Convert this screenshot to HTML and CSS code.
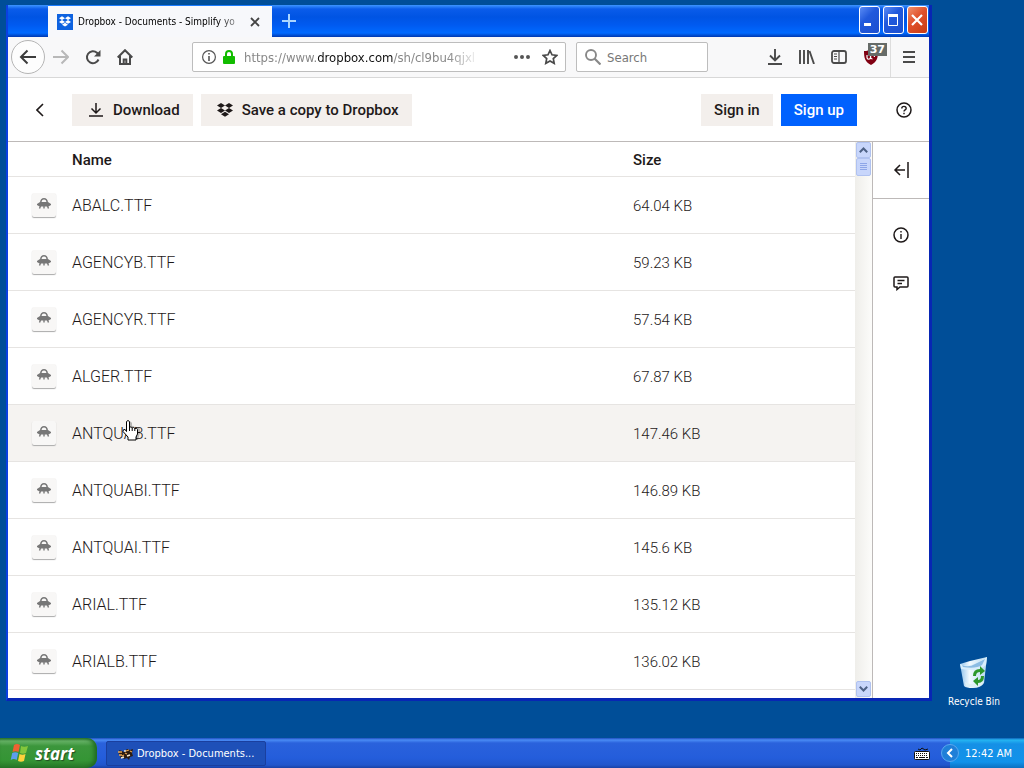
FILE: index.html
```html
<!DOCTYPE html>
<html lang="en">
<head>
  <meta charset="UTF-8">
  <title>Dropbox - Documents - Simplify your life</title>
  <link rel="stylesheet" href="styles.css">
</head>
<body>

  <!-- Shared icons -->
  <svg class="sprite" aria-hidden="true">
    <symbol id="dropbox" viewBox="0 0 16 14">
      <path d="M4 0l4 2.500L4 5 0 2.500zM12 0l4 2.500L12 5 8 2.500zM4 5l4 2.500L4 10 0 7.500zM12 5l4 2.500L12 10 8 7.500zM8 8.700l4 2.500L8 13.800l-4-2.600z" fill="currentColor"/>
    </symbol>
    <symbol id="ufo" viewBox="0 0 14 11">
      <path d="M3.800 4.500a3.200 3.700 0 0 1 6.400 0" fill="none" stroke="#777" stroke-width="1.600"/>
      <path d="M3 4h8l3 2v1l-2.500 1.500h-9L0 7V6z" fill="#777"/>
      <path d="M3.500 8L2.500 10.500M7 8v2.500M10.500 8l1 2.500" stroke="#777" stroke-width="1.400"/>
    </symbol>
  </svg>

  <div class="desktop">
    <!-- Browser window -->
    <div class="window">
      <div class="titlebar">
        <div class="tab">
          <span class="favicon"><svg width="12" height="11"><use href="#dropbox"/></svg></span>
          <span class="tab-title">Dropbox - Documents - Simplify yo</span>
          <button class="plain tab-close" aria-label="Close tab"><svg width="10" height="10" viewBox="0 0 10 10"><path d="M1 1l8 8M9 1L1 9" stroke="#444" stroke-width="1.800"/></svg></button>
        </div>
        <button class="plain new-tab" aria-label="New tab"><svg width="14" height="14" viewBox="0 0 14 14"><path d="M7 0v14M0 7h14" stroke="#a9d5ff" stroke-width="2"/></svg></button>
        <div class="window-buttons">
          <button class="xp-button" aria-label="Minimize"><svg width="18" height="24" viewBox="0 0 18 24"><path d="M4 16.500h7" stroke="#fff" stroke-width="3"/></svg></button>
          <button class="xp-button" aria-label="Maximize"><svg width="18" height="24" viewBox="0 0 18 24"><path d="M4.500 7v10.500h9V7z" fill="none" stroke="#fff"/><path d="M4 7.500h10" stroke="#fff" stroke-width="3"/></svg></button>
          <button class="xp-button xp-close" aria-label="Close"><svg width="18" height="24" viewBox="0 0 18 24"><path d="M4 7l10 10M14 7L4 17" stroke="#fff" stroke-width="2.200"/></svg></button>
        </div>
      </div>

      <div class="toolbar">
        <button class="plain back" aria-label="Back"><svg width="18" height="16" viewBox="0 0 18 16"><path d="M17 8H2M8.500 1.500L2 8l6.500 6.500" fill="none" stroke="#3c3c3c" stroke-width="2"/></svg></button>
        <button class="plain tool" aria-label="Forward"><svg width="16" height="16" viewBox="0 0 16 16"><path d="M0 8h14.500M8.500 1.500L15 8l-6.500 6.500" fill="none" stroke="#b8b8b8" stroke-width="2"/></svg></button>
        <button class="plain tool" aria-label="Reload"><svg width="16" height="16" viewBox="0 0 16 16"><path d="M13.500 10.500A6 6 0 1 1 12 3.800L13.500 5.500" fill="none" stroke="#4a4a4a" stroke-width="2"/><path d="M15.500 1v6.500H9z" fill="#4a4a4a"/></svg></button>
        <button class="plain tool" aria-label="Home"><svg width="16" height="16" viewBox="0 0 16 16"><path d="M.7 8.500L8 1.200l7.300 7.300M3 7v8h10V7M6.700 15v-4.500h2.600V15" fill="none" stroke="#4a4a4a" stroke-width="2"/></svg></button>
        <span class="spacer"></span>
        <div class="address">
          <svg width="14" height="14" viewBox="0 0 14 14"><circle cx="7" cy="7" r="6.400" fill="none" stroke="#555" stroke-width="1.200"/><path d="M7 3v1.600M7 6v5" stroke="#555" stroke-width="1.600"/></svg>
          <svg class="lock" width="12" height="14" viewBox="0 0 12 14"><path d="M3 7V4a3 3 0 0 1 6 0v3" fill="none" stroke="#12bc00" stroke-width="2"/><rect y="6" width="12" height="8" rx="1" fill="#12bc00"/></svg>
          <a class="url" href="#">https://www.<b>dropbox.com</b>/sh/cl9bu4qjxl</a>
          <button class="plain dots" aria-label="Page actions"><svg width="16" height="4" viewBox="0 0 16 4"><path d="M0 2a2 2 0 1 1 4 0 2 2 0 0 1-4 0M6 2a2 2 0 1 1 4 0 2 2 0 0 1-4 0M12 2a2 2 0 1 1 4 0 2 2 0 0 1-4 0" fill="#555"/></svg></button>
          <button class="plain" aria-label="Bookmark"><svg width="16" height="16" viewBox="0 0 16 16"><path d="M8 1.500l2 4.300 4.800.6-3.500 3.200.9 4.700L8 12l-4.200 2.300.9-4.700L1.200 6.400 6 5.800z" fill="none" stroke="#4a4a4a" stroke-width="1.700"/></svg></button>
        </div>
        <div class="search">
          <svg width="16" height="16" viewBox="0 0 16 16"><circle cx="6" cy="6" r="5" fill="none" stroke="#888" stroke-width="1.900"/><path d="M9.500 9.500l6 6" stroke="#888" stroke-width="2.200"/></svg>
          <input type="text" placeholder="Search" aria-label="Search">
        </div>
        <span class="spacer"></span>
        <button class="plain tool" aria-label="Downloads"><svg width="14" height="16" viewBox="0 0 14 16"><path d="M7 0v11M2 6.500l5 5 5-5M0 15h14" fill="none" stroke="#4a4a4a" stroke-width="1.900"/></svg></button>
        <button class="plain tool" aria-label="Library"><svg width="16" height="14" viewBox="0 0 16 14"><path d="M1 0v14M5 0v14M9 0v14M10.500 1l4.500 13" fill="none" stroke="#4a4a4a" stroke-width="1.900"/></svg></button>
        <button class="plain tool" aria-label="Sidebars"><svg width="16" height="14" viewBox="0 0 16 14"><rect x="1" y="1" width="14" height="12" rx="2" fill="none" stroke="#4a4a4a" stroke-width="1.800"/><path d="M8 1v12M3 4h3M3 6.500h3M3 9h3" stroke="#4a4a4a" stroke-width="1.200"/></svg></button>
        <button class="plain tool shield" aria-label="Blocked requests">
          <svg width="14" height="16" viewBox="0 0 14 16"><path d="M7 0c2 1.500 4 2 7 2 0 7-1 11-7 14C1 13 0 9 0 2c3 0 5-.5 7-2z" fill="#800012"/><path d="M3 6v2.500a1.500 1.500 0 0 0 3.500 0V6M8.500 10a2 2 0 1 1 2-2" fill="none" stroke="#fff" stroke-width="1.200"/></svg>
          <span class="badge">37</span>
        </button>
        <button class="plain menu" aria-label="Menu"><svg width="12" height="12" viewBox="0 0 12 12"><path d="M0 1h12M0 6h12M0 11h12" stroke="#4a4a4a" stroke-width="1.800"/></svg></button>
      </div>

      <!-- Page header -->
      <div class="page-header">
        <button class="plain page-back" aria-label="Go back"><svg width="8" height="14" viewBox="0 0 8 14"><path d="M7 1L1 7l6 6" fill="none" stroke="#1e1919" stroke-width="1.600"/></svg></button>
        <button class="btn"><svg width="16" height="14" viewBox="0 0 16 14"><path d="M8 0v10M3.500 5.500L8 10l4.500-4.500M1 13h14" fill="none" stroke="#1e1919" stroke-width="1.500"/></svg>Download</button>
        <button class="btn"><svg width="16" height="14"><use href="#dropbox"/></svg>Save a copy to Dropbox</button>
        <span class="spacer"></span>
        <button class="btn sign-in">Sign in</button>
        <button class="btn primary">Sign up</button>
        <button class="plain help" aria-label="Help"><svg width="16" height="16" viewBox="0 0 16 16"><circle cx="8" cy="8" r="7" fill="none" stroke="#1e1919" stroke-width="1.500"/><path d="M5.800 6.500C5.800 3.700 10.200 3.700 10.200 6.300 10.200 8 8 7.700 8 9.600M8 10.800v1.500" fill="none" stroke="#1e1919" stroke-width="1.400"/></svg></button>
      </div>

      <div class="content">
        <div class="files">
          <table>
            <thead>
              <tr><th class="name">Name</th><th>Size</th></tr>
            </thead>
            <tbody>
              <tr><td><a class="file" href="#"><span class="thumb"><svg width="14" height="11"><use href="#ufo"/></svg></span>ABALC.TTF</a></td><td>64.04 KB</td></tr>
              <tr><td><a class="file" href="#"><span class="thumb"><svg width="14" height="11"><use href="#ufo"/></svg></span>AGENCYB.TTF</a></td><td>59.23 KB</td></tr>
              <tr><td><a class="file" href="#"><span class="thumb"><svg width="14" height="11"><use href="#ufo"/></svg></span>AGENCYR.TTF</a></td><td>57.54 KB</td></tr>
              <tr><td><a class="file" href="#"><span class="thumb"><svg width="14" height="11"><use href="#ufo"/></svg></span>ALGER.TTF</a></td><td>67.87 KB</td></tr>
              <tr class="hovered"><td><a class="file" href="#"><span class="thumb"><svg width="14" height="11"><use href="#ufo"/></svg></span>ANTQUAB.TTF</a></td><td>147.46 KB</td></tr>
              <tr><td><a class="file" href="#"><span class="thumb"><svg width="14" height="11"><use href="#ufo"/></svg></span>ANTQUABI.TTF</a></td><td>146.89 KB</td></tr>
              <tr><td><a class="file" href="#"><span class="thumb"><svg width="14" height="11"><use href="#ufo"/></svg></span>ANTQUAI.TTF</a></td><td>145.6 KB</td></tr>
              <tr><td><a class="file" href="#"><span class="thumb"><svg width="14" height="11"><use href="#ufo"/></svg></span>ARIAL.TTF</a></td><td>135.12 KB</td></tr>
              <tr><td><a class="file" href="#"><span class="thumb"><svg width="14" height="11"><use href="#ufo"/></svg></span>ARIALB.TTF</a></td><td>136.02 KB</td></tr>
            </tbody>
          </table>
        </div>
        <div class="scrollbar">
          <button class="scroll-button" aria-label="Scroll up"><svg width="9" height="6" viewBox="0 0 9 6"><path d="M.8 5.200l3.700-3.700 3.700 3.700" fill="none" stroke="#4d6185" stroke-width="2"/></svg></button>
          <div class="scroll-thumb"><svg width="7" height="8" viewBox="0 0 7 8"><path d="M0 .5h7M0 2.500h7M0 4.500h7M0 6.500h7" stroke="#8ea6e8"/></svg></div>
          <span class="spacer"></span>
          <button class="scroll-button" aria-label="Scroll down"><svg width="9" height="6" viewBox="0 0 9 6"><path d="M.8.8l3.700 3.700L8.200.8" fill="none" stroke="#4d6185" stroke-width="2"/></svg></button>
        </div>
        <div class="side">
          <button class="plain collapse" aria-label="Open sidebar"><svg width="16" height="16" viewBox="0 0 16 16"><path d="M12 8H2M7 3L2 8l5 5M15 0v16" fill="none" stroke="#1e1919" stroke-width="1.500"/></svg></button>
          <button class="plain side-button" aria-label="File info"><svg width="16" height="16" viewBox="0 0 16 16"><circle cx="8" cy="8" r="7" fill="none" stroke="#1e1919" stroke-width="1.500"/><path d="M8 4v1.600M8 7v5" stroke="#1e1919" stroke-width="1.400"/></svg></button>
          <button class="plain side-button" aria-label="Comments"><svg width="16" height="16" viewBox="0 0 16 16"><path d="M2 2h12q1 0 1 1v8q0 1-1 1H7l-3 2.500V12H2q-1 0-1-1V3q0-1 1-1z" fill="none" stroke="#1e1919" stroke-width="1.500"/><path d="M4.500 5.500h7M4.500 8.500h4.500" stroke="#1e1919" stroke-width="1.400"/></svg></button>
        </div>
      </div>
    </div>

    <!-- Desktop icon -->
    <a class="recycle" href="#">
      <svg width="30" height="32" viewBox="0 0 30 32">
        <defs><linearGradient id="bin"><stop offset="0" stop-color="#8fc2ec"/><stop offset=".35" stop-color="#f2faff"/><stop offset="1" stop-color="#b5d8ee"/></linearGradient></defs>
        <path d="M1 7l10-3 17-4-3 26q-3 5-11 5-7 0-9-2z" fill="url(#bin)"/>
        <path d="M1 7q8 3 14 0t13-7l-1 8q-6 5-12 5T2 12z" fill="#d9eefb"/>
        <path d="M3 8q7 3 13-1l10-5-3 6q-6 4-19 2z" fill="#8bbce3"/>
        <path d="M6 25q9 5 19-1l-2 4q-8 4-16 1z" fill="#dff0f5"/>
        <path d="M14 19q0-7 7-7V9l5 5-5 4v-3q-4 0-4 4zM25 19q0 7-6 7v3l-5-5 5-4v3q3 0 3-4z" fill="#2d982a"/>
      </svg>
      <span>Recycle Bin</span>
    </a>

    <!-- Hand pointer -->
    <svg class="cursor" width="19" height="24" viewBox="0 0 19 24">
      <path d="M7 4V14L5 11q-2-2-3 0l5 10h9l2-7v-4q-1-2-3-1-1-2-3-1-1-2-2-1V4q-2-3-3 0z" fill="#000" opacity=".25"/>
      <path d="M4.500 2.500q1.500-2 3 0v6q1.500-1.500 2.700.3 1.500-1 2.600.7 2-.8 2.700 1V15l-1.500 3v3h-8v-3L1 12.500Q.8 10 3 10.500l1.500 2z" fill="#fff" stroke="#000"/>
      <path d="M7.500 8v4M10.200 9v3M12.800 9.500V12" stroke="#000"/>
    </svg>
  </div>

  <div class="taskbar">
    <button class="start">
      <svg width="20" height="20" viewBox="0 0 20 20">
        <path d="M4 2q3-2 6 0L8.500 9q-3-1.500-6 0z" fill="#ee6132"/>
        <path d="M11 3q3 1.500 7 0l-2 7q-3 1.500-6 0z" fill="#83c63c"/>
        <path d="M2.200 10q3-1.500 6 0l-1.500 7q-3-2-6 0z" fill="#5d9eee"/>
        <path d="M9.500 11q3 1.500 6 0L14 18q-3 1.500-6 0z" fill="#ffd23c"/>
      </svg>
      start
    </button>
    <button class="task">
      <svg width="16" height="14" viewBox="0 0 16 14">
        <path d="M1 3l3 1 2 1 3-3 3 1 3-1-1 4 1 3-3 1-1 3-2-2-3 1-1-2-3 1 1-3-3-1 2-1z" fill="#2b1c12"/>
        <path d="M0 5h4M1 8h3M8 4l3-1M7 6l2 1M12 4l2 1M4 9l2-1" stroke="#e9a44c" stroke-width="1.300"/>
        <path d="M9 9l3-1M6 4h2M3 11l3-1" stroke="#f7ead0" stroke-width="1.400"/>
      </svg>
      Dropbox - Documents...
    </button>
    <span class="spacer"></span>
    <svg class="keyboard" width="16" height="14" viewBox="0 0 16 14">
      <path d="M4 2l2 1 2-2 3 2 3-1" fill="none" stroke="#111"/>
      <rect x=".5" y="4.500" width="15" height="8" rx="1" fill="#fff" stroke="#111"/>
      <path d="M2 6.500h12M2 8.500h12" stroke="#111" stroke-dasharray="1 1"/><path d="M2 10.500h2M5 10.500h6M12 10.500h2" stroke="#111"/>
    </svg>
    <div class="tray">
      <button class="tray-toggle" aria-label="Show hidden icons"><svg width="8" height="10" viewBox="0 0 8 10"><path d="M6 1L2 5l4 4" fill="none" stroke="#fff" stroke-width="2"/></svg></button>
      <span>12:42 AM</span>
    </div>
  </div>

</body>
</html>
```

FILE: styles.css
```css
* { box-sizing: border-box; }
body {
  margin: 0;
  height: 100vh;
  display: flex;
  flex-direction: column;
  overflow: hidden;
  background: #004e98;
  font-family: "DejaVu Sans Condensed", "DejaVu Sans", sans-serif;
  font-size: 10px;
}
button {
  font-family: inherit;
  font-size: inherit;
  padding: 0;
  border: 0;
}
a { color: inherit; text-decoration: none; }
svg { flex: none; display: block; }
.sprite { position: absolute; width: 0; height: 0; }
.spacer { flex: 1; }
.plain {
  display: flex;
  align-items: center;
  justify-content: center;
  flex: none;
  background: none;
}

.desktop { position: relative; flex: 1; }
.window {
  position: absolute;
  top: 5px;
  right: 92px;
  bottom: 37px;
  left: 6px;
  display: flex;
  flex-direction: column;
  border: solid #0a30d0;
  border-width: 0 3px 3px 2px;
  border-color: #0a30d0 #0826b4 #0826b4 #0a40e0;
  background: #fff;
}

/* Title bar */
.titlebar {
  display: flex;
  flex: none;
  height: 32px;
  padding: 0 1px 0 40px;
  background: linear-gradient(#3d95ff 0, #0a5cea 4px, #0054e3 12px, #005af0 20px, #006aff 28px, #0038b0 32px);
}
.tab {
  display: flex;
  align-items: center;
  width: 224px;
  padding: 0 9px;
  border-top: 1px solid #1a7cff;
  background: #f7f8fb;
}
.favicon {
  display: flex;
  align-items: center;
  justify-content: center;
  width: 16px;
  height: 16px;
  margin-right: 5px;
  background: #0d62e0;
  color: #fff;
}
.tab-title {
  flex: 1;
  overflow: hidden;
  white-space: nowrap;
  mask-image: linear-gradient(to right, #000 140px, transparent 170px);
}
.tab-close { width: 16px; height: 16px; }
.new-tab { width: 34px; }
.window-buttons {
  display: flex;
  gap: 3px;
  margin-left: auto;
  padding-top: 1px;
}
.xp-button {
  width: 21px;
  height: 28px;
  overflow: hidden;
  border: 1px solid #fff;
  border-radius: 3px;
  background: linear-gradient(135deg, #5b8cf5, #2159dc 40%, #1c4fd0);
}
.xp-close { background: linear-gradient(135deg, #f0906c, #e0502a 45%, #c83c14); }

/* Toolbar */
.toolbar {
  display: flex;
  align-items: center;
  flex: none;
  height: 41px;
  padding: 0 3px;
  border-bottom: 1px solid #d8d8d8;
  background: #f8f8f9;
}
.back {
  width: 34px;
  height: 34px;
  border: 1px solid #b5b5b5;
  border-radius: 50%;
  background: #fdfdfd;
}
.tool { width: 32px; height: 32px; }
.address, .search {
  display: flex;
  align-items: center;
  height: 30px;
  padding: 0 7px 0 9px;
  border: 1px solid #bdbdbd;
  border-radius: 2px;
  background: #fff;
}
.address { flex: 0 1 374px; min-width: 0; }
.lock { margin: 0 9px 0 7px; }
.url {
  flex: 1;
  overflow: hidden;
  white-space: nowrap;
  color: #888;
  font-size: 13px;
  mask-image: linear-gradient(to right, #000 204px, transparent 236px);
}
.url b { color: #111; font-weight: normal; }
.dots { margin: 0 12px 0 36px; }
.search { flex: 0 1 132px; margin-left: 10px; padding: 0 8px; }
.search input {
  width: 100%;
  min-width: 0;
  padding: 0;
  margin-left: 6px;
  border: 0;
  outline: 0;
  font-family: inherit;
  font-size: 13px;
}
.search input::placeholder { color: #777; }
.shield { position: relative; }
.badge {
  position: absolute;
  top: 2px;
  right: 0;
  padding: 0 2px;
  background: #666b68;
  color: #fff;
  font: bold 11px/13px "DejaVu Sans", sans-serif;
}
.menu { width: 36px; height: 40px; margin-left: 3px; border-left: 1px solid #ddd; }

/* Page header */
.page-header {
  display: flex;
  align-items: center;
  gap: 8px;
  flex: none;
  height: 64px;
  padding: 0 15px 0 16px;
  border-bottom: 1px solid #bdb9b8;
}
.page-back { width: 32px; height: 32px; margin-right: 8px; }
.btn {
  display: flex;
  align-items: center;
  gap: 9px;
  height: 32px;
  padding: 0 13px 0 16px;
  background: #f3efec;
  color: #1e1919;
  font: 500 15px/32px Roboto, sans-serif;
  white-space: nowrap;
}
.sign-in, .primary { padding: 0 13px; }
.primary { background: #0061fe; color: #fff; }
.help { width: 20px; height: 32px; margin-left: 29px; }

/* File list */
.content { display: flex; flex: 1; min-height: 0; }
.files {
  flex: 1;
  min-width: 0;
  overflow: hidden;
  color: #1e1919;
  font-family: Roboto, sans-serif;
  font-size: 15px;
}
table { width: 100%; table-layout: fixed; border-collapse: collapse; }
th, td {
  padding: 2px 0 0;
  border-bottom: 1px solid #e6e4e2;
  text-align: left;
}
th { height: 34px; font-weight: 500; }
th:last-child { width: 222px; }
th.name { padding-left: 64px; }
td { height: 57px; font-weight: 300; }
.file { display: flex; align-items: center; padding-left: 24px; font-size: 16px; }
.thumb {
  display: flex;
  align-items: center;
  justify-content: center;
  width: 24px;
  height: 24px;
  margin: 0 16px 2px 0;
  padding-bottom: 2px;
  border-radius: 2px;
  background: #f8f7f6;
  box-shadow: 0 1px 1px #aaa;
}
.hovered td { background: #f5f3f1; }

.scrollbar {
  display: flex;
  flex-direction: column;
  width: 17px;
  padding: 0 0 1px 1px;
  background: linear-gradient(to right, #efeeea, #fcfcfa);
}
.scroll-button, .scroll-thumb {
  display: flex;
  align-items: center;
  justify-content: center;
  height: 16px;
  width: 15px;
  border: 1px solid #b0c2f0;
  border-radius: 2px;
  background: #c8d6fb;
}
.scroll-thumb { height: 18px; }
.side {
  width: 57px;
  border-left: 1px solid #bdb9b8;
}
.collapse {
  width: 100%;
  height: 57px;
  border-bottom: 1px solid #bdb9b8;
  margin-bottom: 12px;
}
.side-button { width: 100%; height: 48px; }

/* Desktop items */
.recycle {
  position: absolute;
  right: 15px;
  bottom: 28px;
  display: flex;
  flex-direction: column;
  align-items: center;
  gap: 5px;
  width: 70px;
  color: #fff;
  line-height: 16px;
  white-space: nowrap;
}
.cursor { position: absolute; left: 122px; top: 419px; }

/* Taskbar */
.taskbar {
  display: flex;
  flex: none;
  height: 30px;
  background: linear-gradient(#1f4fc0 0, #4a8cf5 2px, #2a62dc 5px, #245ddb 20px, #2156cc 27px, #1941a5 30px);
  color: #fff;
  font-size: 11px;
}
.start {
  display: flex;
  align-items: center;
  gap: 5px;
  width: 97px;
  padding-left: 10px;
  border-radius: 0 10px 10px 0;
  background: linear-gradient(#2f7a30 0, #68b368 3px, #3c963c 8px, #359535 22px, #2a7a2a 30px);
  box-shadow: inset -3px 0 4px #1f6a22;
  color: #fff;
  font: italic bold 17px "Open Sans", sans-serif;
  text-shadow: 1px 1px 1px #234d22;
}
.task {
  display: flex;
  align-items: center;
  gap: 3px;
  width: 160px;
  height: 25px;
  margin: 3px 0 0 9px;
  padding-left: 11px;
  border: 1px solid #1a3f9e;
  border-radius: 2px;
  background: #1e50b8;
  color: #fff;
  white-space: nowrap;
}
.keyboard { margin: 9px 20px 0 0; }
.tray {
  display: flex;
  align-items: center;
  width: 74px;
  background: linear-gradient(#0d62b8 0, #25b5f2 2px, #1590e6 6px, #1192ea 24px, #0c70c0 30px);
  white-space: nowrap;
}
.tray-toggle {
  display: flex;
  align-items: center;
  justify-content: center;
  flex: none;
  width: 18px;
  height: 18px;
  margin: 0 6px 0 -9px;
  border: 1px solid #5aa8ee;
  border-radius: 50%;
  background: #1f7fd8;
}
```
